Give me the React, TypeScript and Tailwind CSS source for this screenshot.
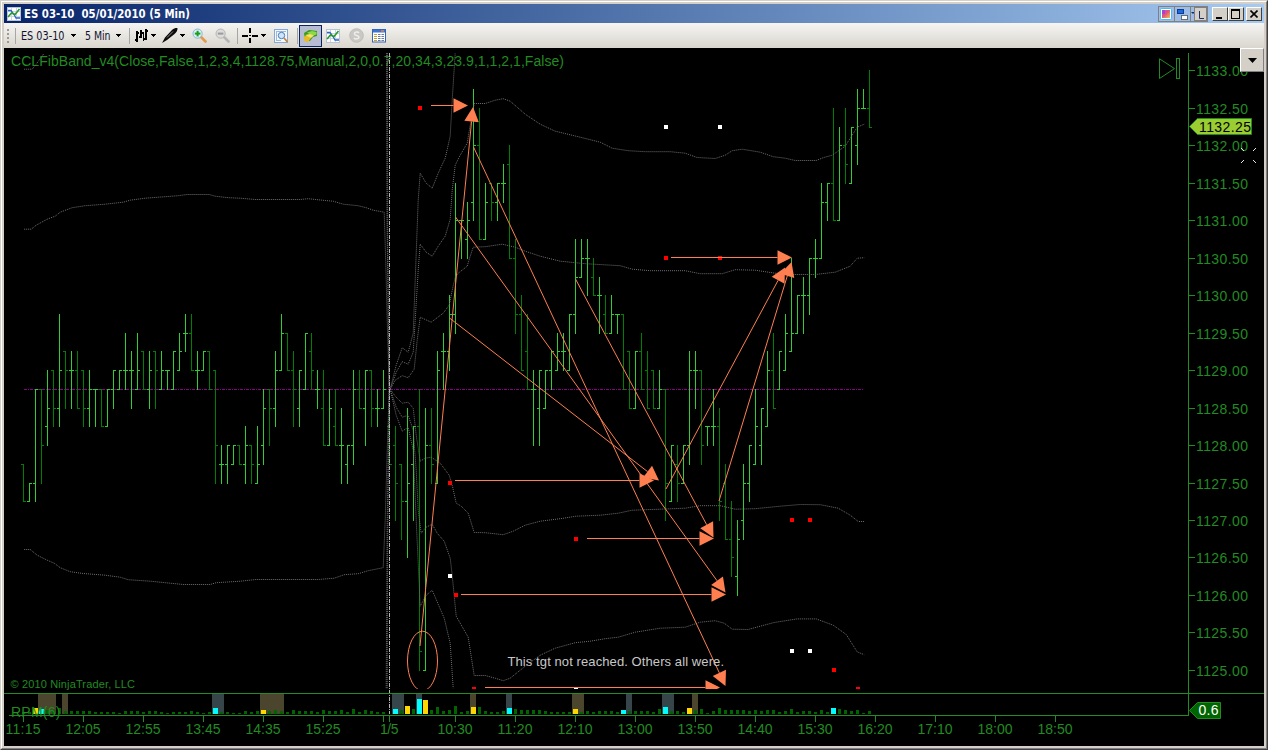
import React from "react";

/* Price bars, one string per bar: open high low close, counted in quarter points below 1133.00 */
const BARS = `21 21 23 23|23 22 23 22|22 17 23 17|17 17 22 20|19 16 20 18|16 16 19 18|18 13 19 16|15 15 18 16|16 15 18 16|16 15 18 18|
16 16 19 18|18 16 19 17|17 17 19 17|17 17 19 19|19 17 19 17|17 16 18 16|17 16 17 16|16 14 17 16|16 15 18 16|17 14 17 16|
15 15 17 17|17 15 18 16|15 15 18 16|17 15 17 16|16 16 17 16|17 15 17 15|16 14 16 15|14 13 15 14|14 13 16 16|16 15 17 16|
16 15 16 15|15 15 17 17|16 16 22 20|21 20 22 21|21 20 22 20|21 20 21 20|20 20 21 21|21 19 22 20|20 20 22 21|22 19 22 21|
20 17 21 18|17 17 20 18|18 15 19 16|16 13 16 14|14 14 16 16|16 15 19 17|18 16 19 16|17 14 17 14|15 14 17 16|17 16 18 17|
18 16 20 20|20 17 20 18|19 17 20 20|20 18 22 20|21 20 22 20|20 16 21 17|17 16 18 18|18 16 20 16|16 16 19 18|18 17 19 18|
18 16 18 17|19 18 21 21|20 19 24 22|21 21 25 23|23 18 26 22|21 19 24 19|19 17 32 31|32 18 32 20|20 18 22 21|22 15 22 16|
15 14 17 15|15 12 16 13|13 6 14 8|8 8 10 8|9 7 10 8|7 1 8 4|4 2 9 9|9 6 9 7|6 6 8 7|7 6 8 6|
6 5 7 6|5 4 10 10|10 9 14 13|13 12 16 16|15 13 17 17|17 16 20 17|18 16 20 16|18 16 18 16|16 15 17 15|16 14 16 15|
15 14 16 15|16 13 16 13|13 9 14 11|11 9 11 10|10 9 12 10|11 10 12 12|12 11 14 12|13 12 14 14|14 12 14 13|13 13 14 13|
13 13 17 17|15 15 18 18|18 15 18 15|15 14 17 17|16 15 18 18|16 16 18 18|18 16 18 17|17 17 24 22|23 20 23 20|21 20 23 22|
22 20 22 20|20 15 21 16|16 15 18 16|16 16 21 20|19 19 20 19|19 17 20 19|19 18 24 23|22 21 25 25|25 23 27 26|27 24 28 25|
24 21 25 22|22 20 23 20|21 17 21 19|20 18 21 18|19 15 19 16|16 14 18 18|17 15 17 15|16 13 16 14|15 10 15 14|14 12 14 12|
12 11 14 12|12 10 13 10|10 9 11 10|10 6 10 7|7 6 8 6|6 2 8 8|8 3 8 4|4 2 6 5|6 3 6 3|4 1 5 2|2 1 2 2|2 0 3 3`
  .split("|")
  .map((s) => s.trim().split(" ").map(Number));

const yOf = (k: number) => Math.floor(70.98 + 18.73 * k);

/* Histogram heights; y = yellow, c = cyan */
const VOLUME =
  "2 2 y6 c5 4 4 6 3 3 3 3 3 2 2 2 2 1 3 3 3 2 3 3 2 1 2 2 2 3 2 1 2 c6 2 2 1 1 3 2 3 y4 3 4 3 2 4 3 3 3 2 4 3 3 4 2 5 2 4 3 2 2 0 c5 4 y8 5 c15 y14 4 7 3 4 8 2 3 y7 7 3 2 2 3 c6 5 4 4 4 4 3 2 2 2 2 y5 2 3 2 3 3 3 2 c4 3 3 3 3 2 5 c7 3 3 2 y6 4 5 1 3 6 4 4 4 4 3 4 3 4 4 2 3 5 2 3 3 2 4 2 c6 5 4 3 4 1 3".split(
    " "
  );

const ZONES: [number, number, string][] = [
  [38, 18, "#4b452d"], [62, 6, "#4b452d"], [212, 12, "#36454a"], [260, 24, "#4b452d"],
  [392, 12, "#36454a"], [416, 6, "#36454a"], [470, 6, "#4b452d"], [506, 6, "#36454a"],
  [572, 12, "#4b452d"], [626, 6, "#36454a"], [662, 12, "#36454a"], [692, 6, "#4b452d"],
];

const BANDS = [
  "24,69 32,69 36,64 44,53",
  "24,229 31,229 36,225 47,219 55,216 60,212 72,207.5 85,205.5 105,204 123,202 130,200 145,198 165,196.5 178,195.5 187,194.3 209,194.3 215,196 228,197.5 240,198 255,199.3 300,199.3 308,198.5 325,200.3 333,201 343,204 358,205.5 366,207.5 373,210 384,212 385.5,260 387,320 389,389",
  "24,549.3 30,549.3 37,555 47,560 54,563 60,567.5 70,571.5 83,573.3 105,575 120,577 128,579.5 150,581 170,583 183,584.3 210,584.3 216,582.5 240,581 256,579.3 318,579.3 334,578 344,574.5 358,573.5 368,570.5 383,567.5 385,520 387,450 389,389",
  "386.3,53 386.8,220 389,389 387,520 386,688",
  "387.3,53 387.5,240 389,389 387.5,540 387,688",
  "390,389 395,380 402,375.5 408,377.5 414,369 417,340 420,317 431,322 443,313 449,305 452,290 455,277 458,273 467,266 470,256 473,247 485,246.5 502,244 515,247 525,251 540,256 560,261 585,263.5 620,265.5 632,269 650,270.5 685,270.5 700,273.5 722,273.5 735,269.5 755,270 775,273 790,274.3 815,274.3 835,272 850,266 857,258 864,257.5",
  "390,389 396,372 402,361.5 408,364 413,352 415,320 418,270 420,244 426,252 432,256 438,246 445,236 450,219 452,190 455,165 460,155 467,143 470,125 474,103.3 485,103.3 495,100 503,98.5 510,101 525,114 540,124 555,131 580,137 600,142 612,148 628,150.5 645,151.5 670,151.5 685,153 697,157.3 715,158.3 725,155 732,150.5 742,149 760,152 773,156.5 785,158 795,160.3 816,160.3 823,157.5 832,155 845,146 857,127 864,124",
  "390,389 396,365 402,347.5 408,352 413,333 415,280 418,200 420,173 426,183 432,188 438,173 445,158 450,136 452,100 455,53",
  "390,389 395,396 402,403 408,402 413,408 416,435 420,461 425,458 431,457 440,463 449,475 452,485 456,503 461,506 468,513 474,532.3 485,532.5 503,534.5 513,531 525,525 540,521 560,518.5 576,516 600,515 618,513 632,510 660,509 685,508 700,505.5 720,505.5 735,509 755,508.5 780,506 800,504.3 820,504.5 838,508 850,515 858,521.3 864,521.3",
  "390,389 396,407 402,417 408,415 413,430 416,470 418,510 421,533 426,527 432,524 437,533 444,541 450,558 452,575 456,616 460,623 468,637 474,675.3 485,675.3 495,678 503,680.5 510,678 525,666 540,655 555,648 575,642.5 590,641 605,638.5 618,637 635,632 660,628 685,627 700,622 715,620.5 724,623 732,629 748,629.3 760,626 774,622.3 797,618.7 816,618.7 833,625 846,634.3 857,651.7 864,654.5",
  "390,389 396,415 402,431 408,427 413,450 416,520 420,606 426,595 432,590 438,604 444,618 450,643 453,688",
];

const ARROWS: [number, number, number, number][] = [
  [431, 105.5, 468, 105.5], [455, 480.5, 654, 480.5], [587, 538.5, 714, 538.5],
  [461, 594.5, 726, 594.5], [671, 257.5, 792, 257.5], [485, 687.5, 720, 687.5],
  [420, 646, 473, 107], [449.5, 318, 659, 480.5], [455.5, 217, 725.5, 592.5],
  [473.5, 147, 725.5, 686], [575.5, 279, 713.5, 537.5], [666, 489, 785, 267.5], [719, 501, 791.5, 262],
];

const RED = [[420, 108], [450, 483], [456, 595], [576, 539], [666, 258], [720, 258], [792, 520], [810, 520], [834, 670], [474, 689], [858, 689]];
const WHITE = [[666, 127], [720, 127], [450, 576], [792, 651], [810, 651], [576, 689]];

const TIMES: [string, number][] = [
  ["11:15", 23], ["12:05", 83], ["12:55", 143], ["13:45", 203], ["14:35", 263], ["15:25", 323],
  ["10:30", 455], ["11:20", 515], ["12:10", 575], ["13:00", 635], ["13:50", 695], ["14:40", 755],
  ["15:30", 815], ["16:20", 875], ["17:10", 935], ["18:00", 995], ["18:50", 1055],
];

const GREEN = "#228b22";

function Arrow({ p }: { p: [number, number, number, number] }) {
  const [x1, y1, x2, y2] = p;
  const len = Math.hypot(x2 - x1, y2 - y1);
  const ux = (x2 - x1) / len;
  const uy = (y2 - y1) / len;
  const bx = x2 - ux * 14.5;
  const by = y2 - uy * 14.5;
  return (
    <g>
      <line x1={x1} y1={y1} x2={bx} y2={by} stroke="#ff7f50" />
      <polygon
        fill="#ff7f50"
        points={`${x2},${y2} ${bx - uy * 7.3},${by + ux * 7.3} ${bx + uy * 7.3},${by - ux * 7.3}`}
      />
    </g>
  );
}

function Chart() {
  return (
    <svg width="1260" height="698" viewBox="4 48 1260 698" className="block bg-black" fontFamily="'Liberation Sans', Arial, sans-serif">
      <defs>
        <clipPath id="main">
          <rect x="4" y="48" width="1184" height="641" />
        </clipPath>
      </defs>
      <text x="11" y="66" fontSize="14" fill={GREEN} textLength="553">
        CCLFibBand_v4(Close,False,1,2,3,4,1128.75,Manual,2,0,0.7,20,34,3,23.9,1,1,2,1,False)
      </text>

      <line x1="24" x2="864" y1="389.5" y2="389.5" stroke="#8b008b" strokeDasharray="3 1 1 1" />

      <g shapeRendering="crispEdges">
        {BARS.map(([o, h, l, c], i) => {
          const x = 23 + 6 * i;
          return (
            <g key={i} fill={c <= o ? "#32cd32" : "#008000"}>
              <rect x={x} y={yOf(h)} width="1" height={yOf(l) - yOf(h) + 1} />
              <rect x={x - 2} y={yOf(o)} width="2" height="1" />
              <rect x={x + 1} y={yOf(c)} width="2" height="1" />
            </g>
          );
        })}
      </g>

      <g clipPath="url(#main)">
        <g fill="none" stroke="#707070" strokeDasharray="1 1" transform="translate(0.2 0.2)">
          {BANDS.map((b) => (
            <polyline key={b} points={b} />
          ))}
        </g>
        {RED.map(([x, y]) => (
          <rect key={`${x}r${y}`} x={x - 2} y={y - 2} width="4" height="4" fill="#ff0000" />
        ))}
        {WHITE.map(([x, y]) => (
          <rect key={`${x}w${y}`} x={x - 2} y={y - 2} width="4" height="4" fill="#ffffff" />
        ))}
        {ARROWS.map((p) => (
          <Arrow key={p.join()} p={p} />
        ))}
        <ellipse cx="422.5" cy="661" rx="15" ry="29.8" fill="none" stroke="#ff7f50" />
      </g>
      <line x1="389.5" x2="389.5" y1="53" y2="714" stroke="#b4b4b4" strokeDasharray="4 1 1 1" />
      <text x="507.5" y="666" fontSize="13" fill="#c8c8c8" textLength="216.500">
        This tgt not reached. Others all were.
      </text>
      <text x="10.5" y="688" fontSize="11" fill={GREEN} textLength="124.5">
        © 2010 NinjaTrader, LLC
      </text>

      <g shapeRendering="crispEdges">
        {ZONES.map(([x, w, c]) => (
          <rect key={x} x={x} y="694" width={w} height="20" fill={c} />
        ))}
        {VOLUME.map((v, i) => {
          const x = 23 + 6 * i;
          const kind = v[0];
          const accent = kind === "y" || kind === "c";
          const h = Number(accent ? v.slice(1) : v);
          return (
            <rect
              key={i}
              x={accent ? x - 2 : x - 1}
              y={714 - h}
              width={accent ? 5 : 3}
              height={h}
              fill={kind === "y" ? "#ffd700" : kind === "c" ? "#00ffff" : "#006400"}
            />
          );
        })}
      </g>
      <text x="11" y="717" fontSize="14" fill={GREEN} textLength="49.5">RPM(6)</text>

      <g fill={GREEN} shapeRendering="crispEdges">
        <rect x="4" y="693" width="1260" height="1" />
        <rect x="9" y="715" width="1180" height="1" />
        <rect x="1188" y="53" width="1" height="663" />
        {TIMES.map(([t, x]) => (
          <rect key={t} x={x} y="716" width="1" height="6" />
        ))}
        <rect x="383" y="716" width="1" height="6" />
        <rect x="389" y="716" width="1" height="6" />
      </g>
      <g fill={GREEN} fontSize="14">
        {TIMES.map(([t, x]) => (
          <text key={t} x={x - 17.5} y="734" textLength="35">{t}</text>
        ))}
        <text x="380" y="734" textLength="18.5">1/5</text>
        {Array.from({ length: 17 }, (_, i) => (
          <React.Fragment key={i}>
            <rect x="1189" y={yOf(i * 2)} width="6" height="1" />
            <text x="1196" y={yOf(i * 2) + 5.5} textLength="52">{(1133 - i * 0.5).toFixed(2)}</text>
          </React.Fragment>
        ))}
      </g>

      <polygon points="1189.5,126.5 1197.5,118.5 1251.5,118.5 1251.5,134.5 1197.5,134.5" fill="#9acd32" stroke={GREEN} />
      <text x="1199" y="131.5" fontSize="14" fill="#000" textLength="52">1132.25</text>
      <polygon points="1189.5,710.5 1197.5,702.5 1220.5,702.5 1220.5,718.5 1197.5,718.5" fill="#006400" stroke={GREEN} />
      <text x="1198.5" y="715" fontSize="14" fill="#fff" textLength="20">0.6</text>

      <g fill="none" stroke={GREEN}>
        <path d="M1159.5 58.8V78.5L1174.5 68.6Z" />
        <rect x="1176.5" y="58.5" width="3" height="20" />
      </g>
      <path d="M1241 148l3 3M1256 148l-3 3M1241 163l3-3M1256 163l-3-3" stroke="#e8e8e8" fill="none" />
    </svg>
  );
}

function ChartIcon({ size }: { size: number }) {
  return (
    <svg width={size} height={size} viewBox="0 0 14 14">
      <rect x=".5" y=".5" width="13" height="13" fill="#fff" stroke="#b9c3d6" />
      <path d="M4.5 1v12M9.5 1v12M1 4.5h12M1 9.5h12" stroke="#ccd5e4" />
      <path d="M1 3.5h3L7 7.500l2 3.500h4" fill="none" stroke="#2f63c8" strokeWidth="1.3" />
      <path d="M1 10L4.500 6l3.500 1.500L12.5 2" fill="none" stroke="#2a9a2a" strokeWidth="1.6" />
    </svg>
  );
}

function Caret({ className }: { className: string }) {
  return (
    <svg width="5" height="3" viewBox="0 0 5 3" className={`shrink-0 ${className}`} shapeRendering="crispEdges">
      <path d="M0 0h5v1H4v1H3v1H2V2H1V1H0z" fill="#000" />
    </svg>
  );
}

function Sep({ className }: { className: string }) {
  return <div className={`h-4 w-px shrink-0 bg-[#a6a6a6] ${className}`} />;
}

function Magnifier({ plus }: { plus?: boolean }) {
  return (
    <svg width="15" height="15" viewBox="0 0 15 15">
      <path d="M9 9l4.5 4.5" stroke={plus ? "#e39a4a" : "#b5b5b5"} strokeWidth="2.6" strokeLinecap="round" />
      <circle cx="5.6" cy="5.6" r="4.6" fill={plus ? "#d9f0fb" : "#dcdcdc"} stroke={plus ? "#8ab4d0" : "#b5b5b5"} />
      <path d="M2.8 5.6h5.6" stroke={plus ? "#18a018" : "#9a9a9a"} strokeWidth="2" />
      {plus && <path d="M5.6 2.8v5.6" stroke="#18a018" strokeWidth="2" />}
    </svg>
  );
}

function Label({ text, width }: { text: string; width: number }) {
  return (
    <svg width={width} height="14" viewBox={`0 0 ${width} 14`} className="shrink-0">
      <text x="0" y="11" fontSize="11.5" fill="#101030" textLength={width - 0.5} lengthAdjust="spacingAndGlyphs">
        {text}
      </text>
    </svg>
  );
}

function Toolbar() {
  return (
    <div className="flex h-[25px] items-center bg-linear-to-b from-[#f6f5f3] to-[#d9d6ce]">
      <svg width="2" height="16" viewBox="0 0 2 16" className="ml-[3px] shrink-0">
        <path d="M1 1v15" stroke="#9c9a94" strokeWidth="2" strokeDasharray="2 2" />
      </svg>
      <Sep className="ml-1.5" />
      <div className="ml-[5px]"><Label text="ES 03-10" width={44} /></div>
      <Caret className="ml-1.5" />
      <div className="ml-[9px]"><Label text="5 Min" width={26} /></div>
      <Caret className="ml-[5px]" />
      <Sep className="ml-2" />
      <svg width="13" height="15" viewBox="0 0 13 15" className="ml-[5px]" shapeRendering="crispEdges">
        <path d="M1 3h2v11H1zM0 11h1v2H0zM3 4h1v2H3zM5 2h2v8H5zM4 8h1v2H4zM8 4h1v9H8zM7 4h1v2H7zM10 1h2v11h-2zM9 10h1v2H9zM12 2h1v2h-1z" fill="#000" />
      </svg>
      <Caret className="ml-[3px]" />
      <svg width="16" height="15" viewBox="0 0 16 15" className="ml-1.5">
        <path d="M0 15l3-5.5L10 2c2-1.8 4.5-2.2 5.5-1.8C15.6 2 14.500 4.500 12.500 6L5 12z" fill="#0a0a0a" />
        <path d="M5 9.500L11 3.500" stroke="#8c8c8c" />
      </svg>
      <Caret className="ml-[2px]" />
      <div className="ml-[7px]"><Magnifier plus /></div>
      <div className="ml-2"><Magnifier /></div>
      <Sep className="ml-[7px]" />
      <svg width="17" height="17" viewBox="0 0 17 17" className="ml-1" shapeRendering="crispEdges">
        <path d="M0 8h6v2H0zM10 8h6v2h-6zM7 1h2v5H7zM7 11h2v5H7zM7 8h2v1H7z" fill="#000" />
      </svg>
      <Caret className="ml-[2px]" />
      <svg width="15" height="14" viewBox="0 0 15 14" className="ml-2">
        <rect x=".5" y=".5" width="13" height="13" fill="#f4f8fd" stroke="#86a8d6" />
        <path d="M2 2.500h10M2.500 3v9M2 11.500h5" stroke="#9db9e0" />
        <circle cx="7.500" cy="6.500" r="3.200" fill="#cfe6fa" stroke="#4a7db8" />
        <path d="M10 9l3.500 4" stroke="#c8843c" strokeWidth="1.800" />
      </svg>
      <Sep className="ml-2" />
      <div className="ml-[1px] flex h-[22px] w-[23px] items-center justify-center border border-[#0a246a] bg-[#b6bdd2]">
        <svg width="15" height="14" viewBox="0 0 15 14">
          <path d="M1 4l5-3 8 1v5l-4 1-3 4-5-1z" fill="#3c9a1c" />
          <path d="M4 3.500l5-1.500 4.500 1v2.500L9 7z" fill="#8fd84a" />
          <path d="M1 7.500l6-1.500 1 3-3 4-4-1z" fill="#e8bc28" />
          <path d="M2 6l5-1 4 1.500-3 2.500z" fill="#f4e468" />
        </svg>
      </div>
      <div className="ml-1"><ChartIcon size={14} /></div>
      <svg width="15" height="15" viewBox="0 0 15 15" className="ml-[9px]">
        <circle cx="7.500" cy="7.500" r="6.800" fill="#c9c8c5" stroke="#bdbcb9" />
        <path d="M10 5c-1-1.300-4.600-1.300-4.600.7C5.400 8 10 7 10 9.300c0 2-3.800 2-5 .6" fill="none" stroke="#efeeec" strokeWidth="1.500" />
      </svg>
      <svg width="14" height="14" viewBox="0 0 14 14" className="ml-2">
        <rect x=".5" y=".5" width="13" height="12.500" fill="#fff" stroke="#3564b4" />
        <rect x="1" y="1" width="12" height="2.500" fill="#3c74d0" />
        <rect x="9" y="1.300" width="3" height="1.200" fill="#f09040" />
        <path d="M2 5.500h3M2 7.500h3M2 9.500h3M2 11.500h3" stroke="#c9a02c" />
        <path d="M6 5.500h6M6 7.500h6M6 9.500h6M6 11.500h6" stroke="#6a7a9a" strokeDasharray="2.500 1" />
      </svg>
    </div>
  );
}

function WinButton({ children, className }: { children: React.ReactNode; className: string }) {
  return (
    <div className={`flex h-[14px] w-4 items-center justify-center border border-t-white border-r-[#404040] border-b-[#404040] border-l-white bg-[#d4d0c8] ${className}`}>
      {children}
    </div>
  );
}

export default function App() {
  return (
    <div className="relative h-[750px] w-[1268px] overflow-hidden bg-[#d4d0c8] font-['DejaVu_Sans_Condensed','DejaVu_Sans',sans-serif] [font-stretch:condensed]">
      <div className="flex h-[750px] flex-col border border-t-[#d4d0c8] border-r-[#404040] border-b-[#404040] border-l-[#d4d0c8]">
        <div className="flex flex-1 flex-col border border-t-white border-r-[#808080] border-b-[#808080] border-l-white">
          <div className="flex flex-1 flex-col border-2 border-[#d4d0c8]">
            <div className="flex h-[19px] items-center bg-linear-to-r from-[#0a246a] to-[#a6caf0]">
              <div className="ml-[3px] shrink-0"><ChartIcon size={14} /></div>
              <svg width="170" height="16" viewBox="0 0 170 16" className="ml-[3px] block font-bold">
                <text x="0" y="12" fontSize="12" fill="#fff" textLength="166" lengthAdjust="spacingAndGlyphs">
                  ES 03-10{"\u00a0"} 05/01/2010 (5 Min)
                </text>
              </svg>
              <div className="mr-[2px] ml-auto flex items-center">
                <div className="flex h-[16px] w-[50px] border border-[#808080] bg-[#9dbde6]">
                  <svg width="48" height="14" viewBox="0 0 48 14">
                    <defs>
                      <linearGradient id="hue" x1="0" y1="0" x2="1" y2="1">
                        <stop offset="0" stopColor="#f040e0" />
                        <stop offset=".45" stopColor="#e05080" />
                        <stop offset="1" stopColor="#f8c040" />
                      </linearGradient>
                    </defs>
                    <rect x="1.500" y="1.500" width="11" height="11" rx="1" fill="#fff" stroke="#40c0f8" />
                    <rect x="3" y="3" width="8" height="8" fill="url(#hue)" />
                    <rect x="3" y="3" width="3" height="4" fill="#8040e0" opacity=".6" />
                    <path d="M15.500 0v14M31.500 0v14" stroke="#808080" />
                    <rect x="18.500" y="2.500" width="6" height="4" fill="#1c6ce0" stroke="#0c3c98" />
                    <rect x="22.500" y="8.500" width="6" height="4" fill="#fff" stroke="#000" strokeDasharray="1 1" />
                    <path d="M32 5h4l-2 2z" fill="#0c2c78" />
                    <rect x="35.500" y=".5" width="12" height="13" fill="#d4d0c8" stroke="#808080" />
                    <path d="M40.500 4v7.500h4.500" fill="none" stroke="#1c2c6c" />
                  </svg>
                </div>
                <WinButton className="ml-1">
                  <svg width="10" height="10" viewBox="0 0 10 10"><rect x="1" y="8" width="6" height="2" fill="#000" /></svg>
                </WinButton>
                <WinButton className="">
                  <svg width="10" height="10" viewBox="0 0 10 10" shapeRendering="crispEdges"><path d="M0 0h9v10H0zM1 2v7h7V2z" fillRule="evenodd" fill="#000" /></svg>
                </WinButton>
                <WinButton className="ml-0.5">
                  <svg width="8" height="8" viewBox="0 0 8 8"><path d="M.5.500l7 7M7.500.500l-7 7" stroke="#000" strokeWidth="1.600" /></svg>
                </WinButton>
              </div>
            </div>
            <Toolbar />
            <Chart />
          </div>
        </div>
      </div>
      <div className="absolute top-12 left-[1240px] flex size-6 items-center justify-center border border-t-white border-r-[#808080] border-b-[#808080] border-l-white bg-[#d4d0c8]">
        <svg width="9" height="5" viewBox="0 0 9 5"><path d="M0 0h9L4.500 5z" fill="#000" /></svg>
      </div>
    </div>
  );
}
